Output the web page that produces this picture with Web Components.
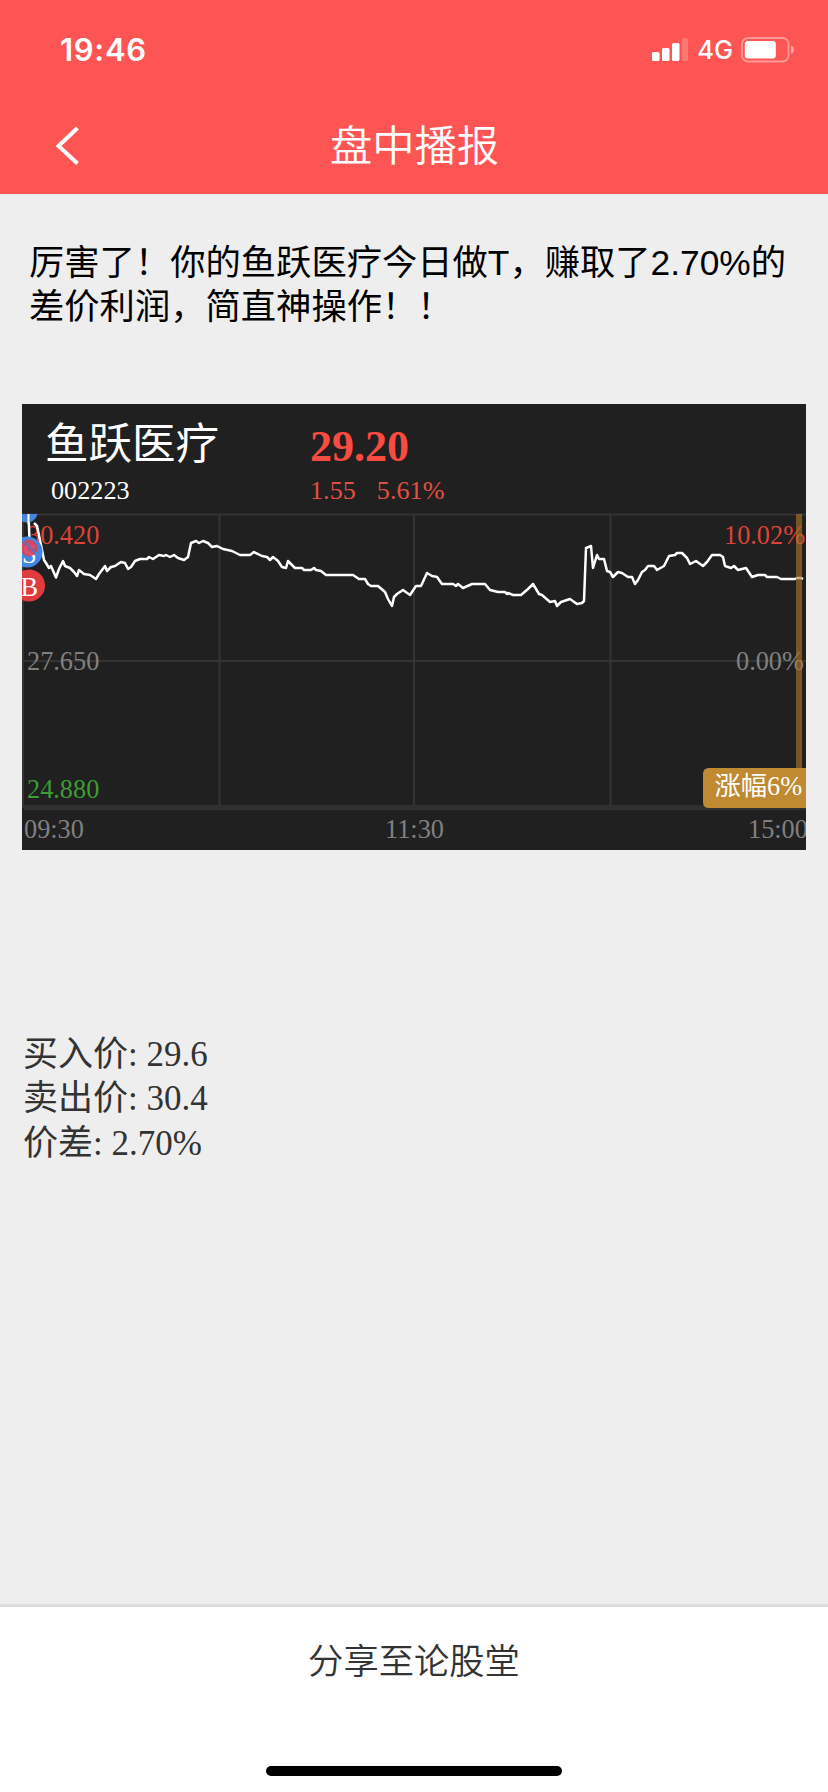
<!DOCTYPE html>
<html lang="zh-CN">
<head>
<meta charset="utf-8">
<title>盘中播报</title>
<style>
html,body{margin:0;padding:0}
body{width:828px;height:1792px;overflow:hidden;background:#eee;font-family:"Liberation Sans","Noto Sans CJK SC",sans-serif}
</style>
</head>
<body>
<broadcast-page></broadcast-page>
<script>
const define = (name, html) => {
  const t = document.createElement('template');
  t.innerHTML = html;
  customElements.define(name, class extends HTMLElement {
    constructor() {
      super();
      this.attachShadow({ mode: 'open' }).appendChild(t.content.cloneNode(true));
    }
  });
};

define('status-bar', `
<style>
:host{display:flex;height:100px;align-items:center;justify-content:space-between;box-sizing:border-box;padding:0 33px 0 60px;color:#fff;font-family:Inter,sans-serif}
.time{font-size:31px;font-weight:600;line-height:40px;letter-spacing:.7px}
.right{display:flex;align-items:center}
.net{font-size:25.5px;font-weight:450;line-height:40px;margin:0 8px 0 7px;letter-spacing:0}
svg{display:block}
</style>
<span class="time">19:46</span>
<div class="right">
<svg width="38" height="24" viewBox="0 0 38 24"><g fill="#fff"><rect x="0" y="14" width="7.5" height="9" rx="1.6"/><rect x="10" y="10" width="7.5" height="13" rx="1.6"/><rect x="20" y="5" width="7.5" height="18" rx="1.6"/><rect x="30" y="0" width="6" height="23" rx="1.6" opacity=".2"/></g></svg>
<span class="net">4G</span>
<svg width="54" height="26" viewBox="0 0 54 26"><rect x="1" y="1" width="46.5" height="23.5" rx="6" fill="none" stroke="#fff" stroke-opacity=".4" stroke-width="1.8"/><rect x="3.8" y="4" width="31" height="17.5" rx="3" fill="#fff"/><path d="M50 8.5c4 1.500 4 7 0 8.500z" fill="#fff" fill-opacity=".5"/></svg>
</div>`);

define('nav-bar', `
<style>
:host{display:grid;grid-template-columns:120px 1fr 120px;height:94px;align-items:center;color:#fff}
svg{display:block;margin-left:55px;margin-top:-2px}
.t{text-align:center;font:350 42.300px/60px "Noto Sans CJK SC",sans-serif;padding:0 0 9px 1px}
</style>
<svg width="26" height="40" viewBox="0 0 26 40"><path d="M22.500 2 3.500 20 22.500 37.500" fill="none" stroke="#fff" stroke-width="4"/></svg>
<div class="t"><slot></slot></div>`);

define('stock-chart', `
<style>
:host{display:block;width:784px;height:446px;background:#202020;color:#fff;font-family:"Liberation Serif","Noto Sans CJK SC",serif;overflow:hidden}
.head{display:grid;grid-template-columns:288px 1fr;height:109px;box-sizing:border-box;padding-top:14px}
.name{font-size:43.500px;line-height:52px;padding-left:23px;white-space:nowrap}
.code{font-size:26.200px;line-height:30px;padding:6px 0 0 29px}
.price{color:#fb4b40;font-size:44px;line-height:52px;font-weight:700;padding-top:3px;height:49px}
.delta{color:#e34f43;font-size:26.200px;line-height:30px;padding-top:6px;display:flex;gap:21px}
svg{display:block}
svg text{font-size:26.300px}
</style>
<div class="head">
<div><div class="name">鱼跃医疗</div><div class="code">002223</div></div>
<div><div class="price">29.20</div><div class="delta"><span>1.55</span><span>5.61%</span></div></div>
</div>
<svg width="784" height="337" viewBox="22 513 784 337">
<g fill="none" stroke="#343434">
<path stroke-width="2" d="M22 514.500H806M24 661H806M219.500 514V807M414 514V807M610.500 514V807M23 514V808"/>
<path stroke-width="5" stroke="#303030" d="M24 807.500H806"/>
</g>
<g fill="#df4337"><text x="27" y="543.500">30.420</text><text x="724" y="543.500">10.02%</text></g>
<g fill="#808080"><text x="27" y="669.500">27.650</text><text x="736" y="669.500">0.00%</text><text x="24" y="837.500">09:30</text><text x="385" y="837.500">11:30</text><text x="748" y="837.500">15:00</text></g>
<text x="27" y="797.500" fill="#3c9c34">24.880</text>
<polyline fill="none" stroke="#fff" stroke-width="2.500" stroke-linejoin="round" points="28.500,514 29.500,540"/>
<polyline fill="none" stroke="#fff" stroke-width="2.500" stroke-linejoin="round" points="34,523 37,526 41,545 44,560 46,563 49,568 51,566 56,577.500 59,569 63,561 65,566 70,568 74,572 77,576 79,570 84,574 90,575 96,579 99,574 105,566 107,571 111,567 115,566 121,562 125,563 128,569 131,567 135,561 140,559 147,559 149,557 153,559 159,555 164,556 166,555 170,557 174,555 178,558 184,560 188,557 191,543 196,541 199,543 203,541 208,543 212,547 217,546 223,549 232,551 240,555 250,555 254,552 262,556 267,557 270,560 273,557 278,561 282,567 286,568 288,561 295,568 302,568 304,570 311,570 314,568 316,570 321,571 326,575 353,575 359,579 365,579 368,584 371,586 378,586 385,592 388,599 392,606 394,597 397,594 403,590 410,595 416,586 421,586 427,573 432,576 437,577 442,584 453,584 456,586 458,584 463,588 472,584 485,584 490,590 498,592 505,592 507,594 508,593 513,595 521,595 528,589 533,584 539,594 542,595 550,602 555,601 557,606 561,602 570,599 577,604 582,603 584,601 586,548 591,546 593,568 597,555 599,559 604,559 607,571 610,572 613,577 618,572 622,573 628,577 632,577 635,584 638,580 642,572 645,570 648,566 654,566 657,570 664,566 669,556 675,555 677,553 682,553 687,558 690,564 696,561 703,566 707,562 712,555 720,555 723,557 725,566 731,568 734,566 738,570 746,568 752,577 758,575 765,575 767,577 777,577 781,579 795,579 797,578 801,578 803,579"/>
<path d="M22 514H37.500A11 11 0 0 1 22 521.500Z" fill="#4286dc"/><path d="M28.500 514V524" stroke="#fff" stroke-width="2"/>
<circle cx="27" cy="552" r="15.500" fill="#4286e3"/><text x="22" y="563" fill="#fff">S</text><circle cx="29" cy="548" r="8.500" fill="#d6435e" opacity=".9"/><path d="M22 541Q28 544 35 553" fill="none" stroke="#4c79cb" stroke-width="1.500"/>
<circle cx="29" cy="585.500" r="16" fill="#e23b3d"/><text x="20.500" y="595.500" fill="#fff">B</text>
<path d="M796 514h6v254h-6z" fill="#b57926" opacity=".6"/>
<path d="M709 768H806V808H709Q703 808 703 802V774Q703 768 709 768Z" fill="#c08a33"/>
<text x="714.500" y="795" fill="#fff">涨幅6%</text>
</svg>`);

define('trade-summary', `
<style>
:host{display:block;color:#333;font:35px/44.300px "Liberation Serif","Noto Sans CJK SC",serif}
::slotted(div){height:44.300px;white-space:pre}
</style><slot></slot>`);

define('share-bar', `
<style>
:host{display:flex;flex-direction:column;align-items:center;justify-content:space-between;height:188px;box-sizing:border-box;border-top:3px solid #ddd;background:#fff;color:#333;padding:27px 0 16px}
.t{font:350 35.300px/50px "Noto Sans CJK SC",sans-serif}
.home{width:296px;height:10px;border-radius:5px;background:#000}
</style>
<div class="t"><slot></slot></div><div class="home"></div>`);

define('broadcast-page', `
<style>
:host{display:flex;flex-direction:column;width:828px;height:1792px;background:#eee}
header{background:#fd5554;height:194px}
p{margin:47px 0 0 29px;color:#000;font:35.300px/44px "Liberation Sans","Noto Sans CJK SC",sans-serif;white-space:nowrap;height:88px}
stock-chart{margin:75px 0 0 22px}
trade-summary{margin:183px 0 0 23px}
share-bar{margin-top:auto}
</style>
<header><status-bar></status-bar><nav-bar>盘中播报</nav-bar></header>
<p>厉害了！你的鱼跃医疗今日做T，赚取了2.70%的<br>差价利润，简直神操作！！</p>
<stock-chart></stock-chart>
<trade-summary><div>买入价: 29.6</div><div>卖出价: 30.4</div><div>价差: 2.70%</div></trade-summary>
<share-bar>分享至论股堂</share-bar>`);
</script>
</body>
</html>
